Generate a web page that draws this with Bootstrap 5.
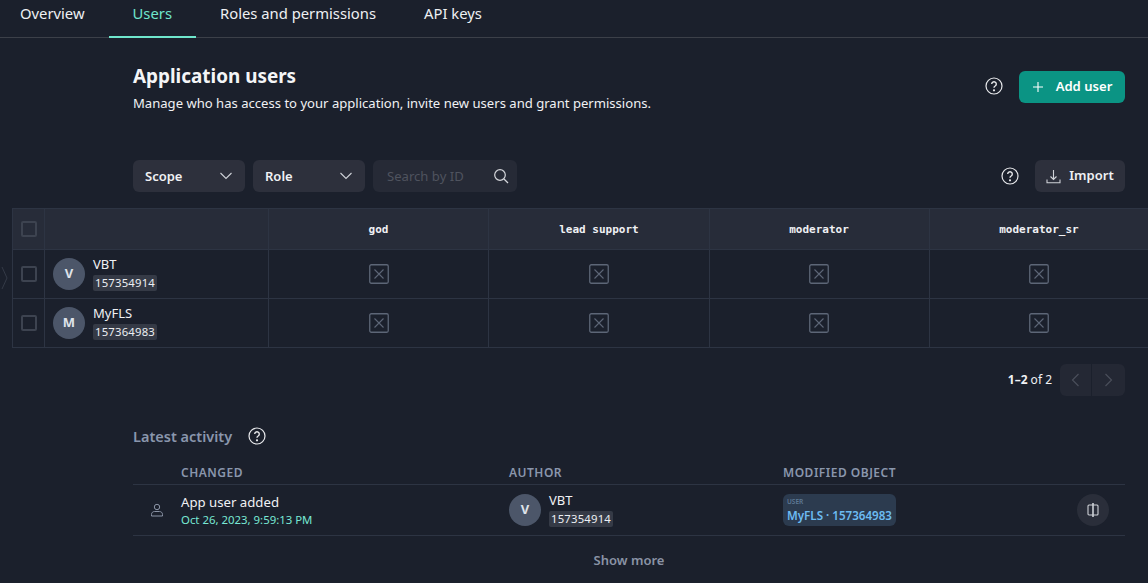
<!DOCTYPE html>
<html lang="en">

<head>
  <meta charset="UTF-8">
  <meta name="viewport" content="width=device-width, initial-scale=1.0">
  <title>Application users</title>
  <link href="https://cdn.jsdelivr.net/npm/bootstrap@5.3.2/dist/css/bootstrap.min.css" rel="stylesheet">
  <style>
    html, body {
      height: 583px;
      overflow: hidden;
    }

    body {
      background-color: #1b202c;
      color: #f0f1f4;
      font-family: "Noto Sans", "Open Sans", sans-serif;
      font-size: 13px;
      position: relative;
    }

    .top-tabs {
      height: 38px;
      border-bottom: 1px solid #3c4049;
      padding-left: 0;
      margin: 0;
    }

    .top-tabs a {
      display: block;
      height: 38px;
      padding: 2px 24px 0;
      color: #eef0f3;
      font-size: 14.8px;
      line-height: 22px;
      text-decoration: none;
    }

    .top-tabs li:first-child a {
      padding-left: 20px;
    }

    .top-tabs a.on {
      color: #6fe6cc;
      border-bottom: 2px solid #6fe6cc;
    }

    .head-block {
      padding: 26px 23px 0 133px;
    }

    .head-block h1 {
      font-size: 18.9px;
      font-weight: 700;
      line-height: 24px;
      margin: 0 0 5px;
      color: #f4f5f7;
    }

    .head-block p {
      margin: 0;
      font-size: 13.08px;
      line-height: 20px;
    }

    .head-actions {
      padding-top: 7px;
    }

    .help-top {
      margin-top: 6px;
    }

    .add-btn {
      background: #0b9484;
      color: #fff;
      border: 0;
      border-radius: 6px;
      height: 32px;
      width: 106px;
      font-size: 13.1px;
      font-weight: 600;
      padding: 0;
      margin-left: 16px;
    }

    .add-btn:hover {
      background: #0b9484;
      color: #fff;
    }

    .import-btn {
      background: #2d303c;
      color: #f0f1f4;
      border: 0;
      border-radius: 6px;
      height: 32px;
      width: 90px;
      font-size: 13px;
      font-weight: 600;
      padding: 0;
      margin-left: 16px;
    }

    .filter-bar {
      padding: 47px 23px 0 133px;
    }

    .pick-box {
      background: #2d303c;
      border-radius: 6px;
      height: 32px;
      width: 112px;
      padding: 0 12px;
      font-size: 13px;
      font-weight: 600;
      color: #f0f1f4;
    }

    .search-box {
      background: #262a36;
      border-radius: 6px;
      height: 32px;
      width: 144px;
      padding: 0 8px 0 14px;
      color: #4f535e;
      font-size: 13.1px;
    }

    .pick-box span,
    .search-box span {
      padding-top: 2px;
    }

    .grid-wrap {
      margin: 16px 0 0 12px;
      width: 1180px;
    }

    .perm-table {
      table-layout: fixed;
      border-collapse: collapse;
      width: 1137px;
      margin: 0;
    }

    .perm-table th,
    .perm-table td {
      border: 1px solid #2d3443;
      padding: 0;
      text-align: center;
      vertical-align: middle;
      color: #f0f1f4;
      background: transparent;
    }

    .perm-table thead th {
      height: 41px;
      padding-top: 2px;
      background: #272c39;
      font-family: "DejaVu Sans Mono", "Liberation Mono", monospace;
      font-size: 11px;
      font-weight: 700;
    }

    .perm-table thead th:first-child {
      padding-top: 0;
    }

    .perm-table tbody td {
      height: 49px;
    }

    .perm-table th:nth-child(n+5),
    .perm-table td:nth-child(n+5) {
      padding-right: 1px;
    }

    .tick-box {
      display: block;
      width: 16px;
      height: 16px;
      margin: 0 auto;
      border: 2px solid #3d4350;
      border-radius: 2px;
    }

    .round-face {
      width: 32px;
      height: 32px;
      border-radius: 50%;
      background: #4c5669;
      color: #dfe3ea;
      font-size: 13px;
      font-weight: 700;
      flex: none;
    }

    .who-block {
      padding-bottom: 2px;
    }

    .who-name {
      font-size: 13px;
      line-height: 17px;
      margin-bottom: 2px;
      color: #f0f1f4;
    }

    .id-chip {
      display: block;
      width: max-content;
      background: #353a46;
      border-radius: 2px;
      padding: 0 2px;
      font-size: 11.3px;
      line-height: 16px;
      letter-spacing: .2px;
      color: #eceef2;
    }

    .pager-row {
      padding: 16px 23px 0 0;
    }

    .pager-count {
      font-size: 12px;
      margin-right: 8px;
    }

    .pager-btns {
      background: #242834;
      border-radius: 6px;
      height: 32px;
      width: 65px;
    }

    .pager-btns span {
      width: 32px;
      height: 32px;
    }

    .pager-btns span:first-child {
      border-right: 1px solid #1b202c;
    }

    .activity {
      padding: 29px 23px 0 133px;
    }

    .activity h2 {
      margin: 0;
      font-size: 14.5px;
      font-weight: 600;
      line-height: 22px;
      color: #8a96ac;
    }

    .log-head {
      height: 38px;
      padding-top: 18px;
      border-bottom: 1px solid #2d3443;
      font-size: 12px;
      font-weight: 600;
      letter-spacing: .5px;
      line-height: 16px;
      color: #8a96ac;
    }

    .log-row {
      height: 51px;
      border-bottom: 1px solid #2d3443;
    }

    .log-ico {
      width: 48px;
      flex: none;
    }

    .log-changed {
      width: 328px;
      flex: none;
    }

    .log-author {
      width: 274px;
      flex: none;
    }

    .log-title {
      font-size: 13.2px;
      line-height: 18px;
    }

    .log-date {
      padding-top: 1px;
      font-size: 11.4px;
      line-height: 16px;
      color: #78e8d4;
    }

    .object-tag {
      background: #2c3b4f;
      border-radius: 6px;
      width: 113px;
      height: 32px;
      padding: 4px 4px 0;
      color: #6cbcf2;
      font-size: 11.6px;
      font-weight: 600;
      line-height: 15px;
      white-space: nowrap;
    }

    .object-kind {
      display: block;
      margin-bottom: 2px;
      font-size: 6.5px;
      line-height: 8px;
      font-weight: 600;
      color: #5f7a96;
    }

    .round-tool {
      width: 32px;
      height: 32px;
      border-radius: 50%;
      background: #2a2e3a;
      margin-right: 16px;
    }

    .more-link {
      padding-top: 15px;
      font-size: 13px;
      font-weight: 600;
      line-height: 18px;
      color: #8a93a5;
      text-align: center;
    }

    .edge-arrow {
      position: absolute;
      left: 1px;
      top: 266px;
    }
  </style>
</head>

<body>
  <ul class="top-tabs list-unstyled d-flex">
    <li><a href="#">Overview</a></li>
    <li><a href="#" class="on">Users</a></li>
    <li><a href="#">Roles and permissions</a></li>
    <li><a href="#">API keys</a></li>
  </ul>

  <div class="head-block d-flex justify-content-between">
    <div>
      <h1>Application users</h1>
      <p>Manage who has access to your application, invite new users and grant permissions.</p>
    </div>
    <div class="head-actions d-flex align-items-start">
      <svg class="help-top" width="18" height="18" viewBox="0 0 18 18" fill="none" stroke="#e8e9ec" stroke-width="1.2">
        <circle cx="9" cy="9" r="8"/>
        <path d="M6.7 7a2.3 2.3 0 1 1 3.5 2c-.8.5-1.2.9-1.2 1.8" stroke-width="1.4"/>
        <circle cx="9" cy="13.3" r=".5" fill="#e8e9ec"/>
      </svg>
      <button type="button" class="btn add-btn d-flex align-items-center justify-content-center gap-2">
        <svg width="12" height="12" viewBox="0 0 12 12" stroke="#fff" stroke-width="1.1"><path d="M6 1v10M1 6h10"/></svg>
        <span class="ms-1">Add user</span>
      </button>
    </div>
  </div>

  <div class="filter-bar d-flex align-items-center">
    <div class="pick-box d-flex align-items-center justify-content-between me-2">
      <span>Scope</span>
      <svg width="14" height="8" viewBox="0 0 14 8" fill="none" stroke="#cfd2d8" stroke-width="1.1"><path d="M1.5 1l5.5 5.5L12.5 1"/></svg>
    </div>
    <div class="pick-box d-flex align-items-center justify-content-between me-2">
      <span>Role</span>
      <svg width="14" height="8" viewBox="0 0 14 8" fill="none" stroke="#cfd2d8" stroke-width="1.1"><path d="M1.5 1l5.5 5.5L12.5 1"/></svg>
    </div>
    <div class="search-box d-flex align-items-center justify-content-between">
      <span>Search by ID</span>
      <svg width="16" height="16" viewBox="0 0 16 16" fill="none" stroke="#d4d6db" stroke-width="1.2"><circle cx="7" cy="7" r="5.3"/><path d="M11 11l4 4"/></svg>
    </div>
    <svg class="ms-auto" width="18" height="18" viewBox="0 0 18 18" fill="none" stroke="#e8e9ec" stroke-width="1.2">
      <circle cx="9" cy="9" r="8"/>
      <path d="M6.7 7a2.3 2.3 0 1 1 3.5 2c-.8.5-1.2.9-1.2 1.8" stroke-width="1.4"/>
      <circle cx="9" cy="13.3" r=".5" fill="#e8e9ec"/>
    </svg>
    <button type="button" class="btn import-btn d-flex align-items-center justify-content-center gap-2">
      <svg width="15" height="15" viewBox="0 0 15 15" fill="none" stroke="#cfd2d8" stroke-width="1.1"><path d="M7.5 1v9M4.5 7.5l3 3 3-3M1 10.5v3.2h13v-3.2"/></svg>
      <span>Import</span>
    </button>
  </div>

  <div class="grid-wrap">
    <table class="table perm-table">
      <colgroup>
        <col style="width: 32px">
        <col style="width: 224px">
        <col style="width: 220px">
        <col style="width: 221px">
        <col style="width: 220px">
        <col style="width: 220px">
      </colgroup>
      <thead>
        <tr>
          <th><span class="tick-box"></span></th>
          <th></th>
          <th>god</th>
          <th>lead support</th>
          <th>moderator</th>
          <th>moderator_sr</th>
        </tr>
      </thead>
      <tbody id="permRows"></tbody>
    </table>
  </div>

  <svg class="edge-arrow" width="7" height="24" viewBox="0 0 7 24" fill="none" stroke="#343a47" stroke-width="1"><path d="M1 1l5 11L1 23"/></svg>

  <div class="pager-row d-flex justify-content-end align-items-center">
    <span class="pager-count"><b>1–2</b> of 2</span>
    <div class="pager-btns d-flex">
      <span class="d-flex align-items-center justify-content-center">
        <svg width="9" height="14" viewBox="0 0 9 14" fill="none" stroke="#4a4e5a" stroke-width="1.2"><path d="M7.5 1L1.5 7l6 6"/></svg>
      </span>
      <span class="d-flex align-items-center justify-content-center">
        <svg width="9" height="14" viewBox="0 0 9 14" fill="none" stroke="#4a4e5a" stroke-width="1.2"><path d="M1.5 1l6 6-6 6"/></svg>
      </span>
    </div>
  </div>

  <div class="activity">
    <div class="d-flex align-items-center gap-3">
      <h2>Latest activity</h2>
      <svg width="18" height="18" viewBox="0 0 18 18" fill="none" stroke="#e8e9ec" stroke-width="1.2">
        <circle cx="9" cy="9" r="8"/>
        <path d="M6.7 7a2.3 2.3 0 1 1 3.5 2c-.8.5-1.2.9-1.2 1.8" stroke-width="1.4"/>
        <circle cx="9" cy="13.3" r=".5" fill="#e8e9ec"/>
      </svg>
    </div>
    <div class="log-head d-flex">
      <div class="log-ico"></div>
      <div class="log-changed">CHANGED</div>
      <div class="log-author">AUTHOR</div>
      <div>MODIFIED OBJECT</div>
    </div>
    <div class="log-row d-flex align-items-center">
      <div class="log-ico d-flex justify-content-center">
        <svg width="14" height="14" viewBox="0 0 14 14" fill="none" stroke="#8a93a5" stroke-width="1"><circle cx="7" cy="4" r="2.7"/><path d="M1.5 13v-1.5c0-2 1.5-3 3-3h5c1.5 0 3 1 3 3V13z"/></svg>
      </div>
      <div class="log-changed">
        <div class="log-title">App user added</div>
        <div class="log-date">Oct 26, 2023, 9:59:13 PM</div>
      </div>
      <div class="log-author d-flex align-items-center gap-2">
        <span class="round-face d-flex align-items-center justify-content-center">V</span>
        <div class="who-block">
          <div class="who-name">VBT</div>
          <span class="id-chip">157354914</span>
        </div>
      </div>
      <div class="object-tag">
        <span class="object-kind">USER</span>
        MyFLS · 157364983
      </div>
      <span class="round-tool d-flex align-items-center justify-content-center ms-auto">
        <svg width="12" height="14" viewBox="0 0 12 14" fill="none" stroke="#cfd2d8" stroke-width="1.1"><rect x="1" y="2" width="10" height="10" rx="1"/><path d="M6 0v14" stroke-width="1.6"/></svg>
      </span>
    </div>
    <div class="more-link">Show more</div>
  </div>

  <script>
    // rows of the permission grid
    const users = [
      { name: 'VBT', id: '157354914' },
      { name: 'MyFLS', id: '157364983' }
    ];
    const crossBox = '<svg width="20" height="20" viewBox="0 0 20 20" fill="none" stroke="#5d6677"><rect x=".75" y=".75" width="18.5" height="18.5" rx="1.5" stroke-width="1.3"/><path d="M5.5 5.5l9 9M14.5 5.5l-9 9" stroke-width="1.1"/></svg>';

    document.getElementById('permRows').innerHTML = users.map(u => `
      <tr>
        <td><span class="tick-box"></span></td>
        <td>
          <div class="d-flex align-items-center gap-2 text-start ps-2">
            <span class="round-face d-flex align-items-center justify-content-center">${u.name[0]}</span>
            <div class="who-block">
              <div class="who-name">${u.name}</div>
              <span class="id-chip">${u.id}</span>
            </div>
          </div>
        </td>
        <td>${crossBox}</td>
        <td>${crossBox}</td>
        <td>${crossBox}</td>
        <td>${crossBox}</td>
      </tr>`).join('');
  </script>
  <script src="https://cdn.jsdelivr.net/npm/bootstrap@5.3.2/dist/js/bootstrap.bundle.min.js"></script>
</body>

</html>
